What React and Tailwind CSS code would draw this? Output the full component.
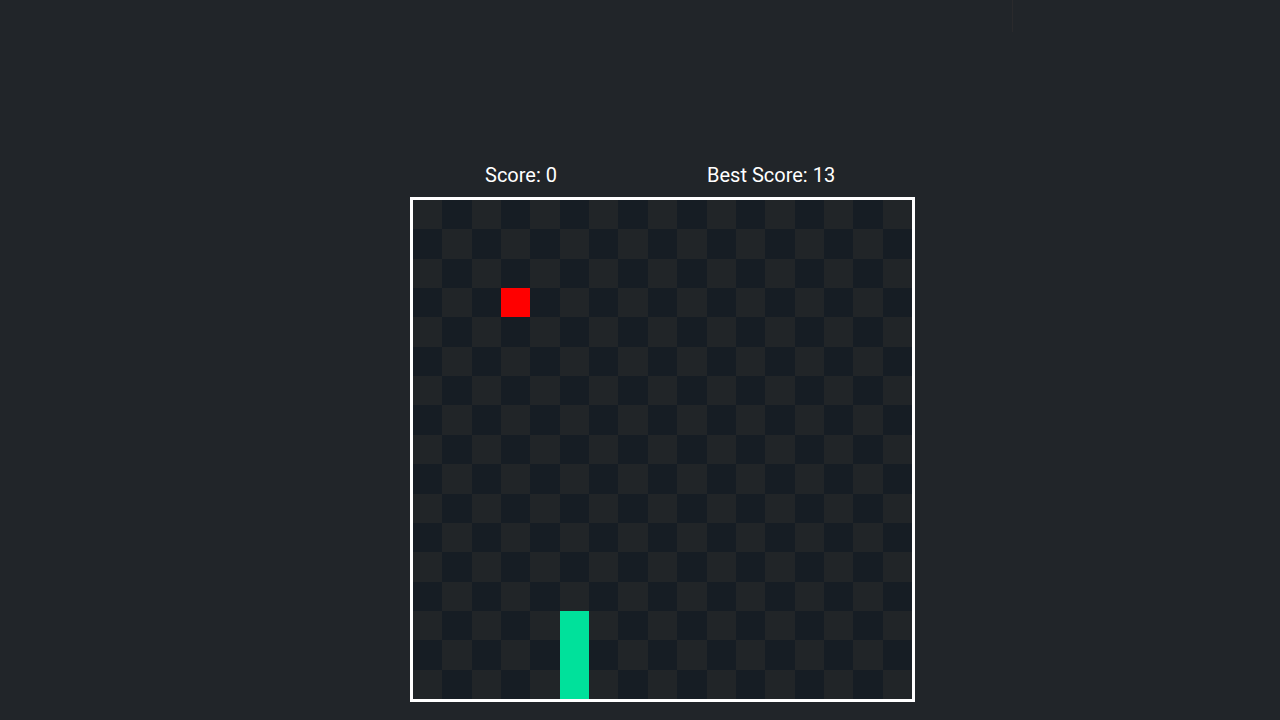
import React from "react";

const N = 17;
const food = [3, 3];
const snake = [[14, 5], [15, 5], [16, 5]];

export default function App() {
  const cells = [];
  for (let r = 0; r < N; r++) {
    for (let c = 0; c < N; c++) {
      const isSnake = snake.some(([sr, sc]) => sr === r && sc === c);
      const isFood = food[0] === r && food[1] === c;
      let cls = (r + c) % 2 === 1 ? "bg-[#161d24]" : "bg-[#212528]";
      if (isSnake) cls = "bg-[#00e19b]";
      else if (isFood) cls = "bg-[#ff0000]";
      cells.push(<div key={r + "-" + c} className={cls} />);
    }
  }
  return (
    <div className="relative w-[1280px] h-[720px] bg-[#212529] overflow-hidden" style={{ fontFamily: "Roboto, 'Liberation Sans', sans-serif" }}>
      <div className="absolute left-[1012px] top-0 w-px h-[32px] bg-[#2a2a2c]" />
      <div className="flex flex-col pl-[410px] pt-[163px]">
        <div className="flex w-[505px] pl-[75px] gap-[150px] text-[20px] leading-[24px] text-white">
          <span>Score: 0</span>
          <span>Best Score: 13</span>
        </div>
        <div className="mt-[10px] w-[505px] h-[505px] border-[3px] border-white grid grid-cols-[repeat(17,1fr)] grid-rows-[repeat(17,1fr)]">
          {cells}
        </div>
      </div>
    </div>
  );
}
